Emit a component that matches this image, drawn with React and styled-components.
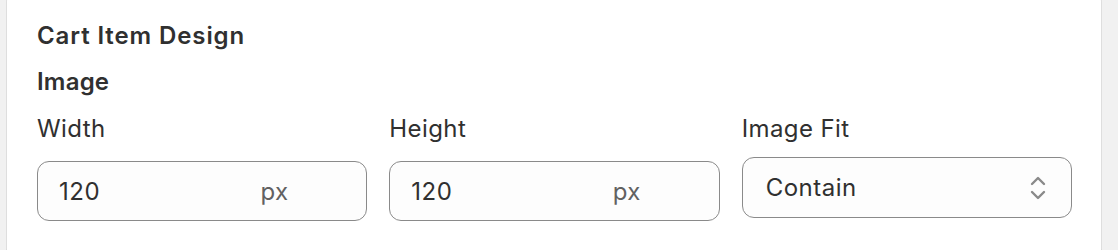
import React from 'react';
import styled, { createGlobalStyle } from 'styled-components';

const GlobalStyle = createGlobalStyle`
  body {
    margin: 0;
    background: #f1f1f1;
    font-family: "Inter", "Noto Sans", sans-serif;
    color: #303030;
    -webkit-font-smoothing: antialiased;
  }
`;

export default function App() {
  return <Page>
    <GlobalStyle/>
    <Card>
      <Title>Cart Item Design</Title>
      <Subtitle>Image</Subtitle>
      <Fields>
        <Field>
          <Label>Width</Label>
          <InputBox>
            <Value>120</Value>
            <Suffix>px</Suffix>
          </InputBox>
        </Field>
        <Field>
          <Label>Height</Label>
          <InputBox>
            <Value>120</Value>
            <Suffix>px</Suffix>
          </InputBox>
        </Field>
        <Field $select>
          <Label>Image Fit</Label>
          <SelectBox>
            <Value>Contain</Value>
            <SelectIcon/>
          </SelectBox>
        </Field>
      </Fields>
    </Card>
  </Page>
}

const SelectIcon = () => <IconSVG xmlns="http://www.w3.org/2000/svg" width="18" height="26" viewBox="0 0 18 26" fill="none" stroke="currentColor" strokeWidth="2.4" strokeLinecap="round" strokeLinejoin="round"><polyline points="3,9 9,3 15,9"></polyline><polyline points="3,17 9,23 15,17"></polyline></IconSVG>

const Page = styled.div`
  padding-left: 6px;
  width: 1096px;
  height: 250px;
  overflow: hidden;
`

const Card = styled.div`
  margin-top: -10px;
  background: #ffffff;
  border-radius: 12px;
  box-shadow: inset 1px 0 0 0 rgba(0,0,0,0.13), inset -1px 0 0 0 rgba(0,0,0,0.13), inset 0 -1px 0 0 rgba(0,0,0,0.17);
  padding: 30px 30px 40px 31px;
`

const Title = styled.h2`
  margin: 0;
  font-size: 24px;
  font-weight: 600;
  letter-spacing: 0.9px;
  line-height: 32px;
`

const Subtitle = styled.h3`
  margin: 14px 0 0;
  font-size: 24px;
  font-weight: 600;
  letter-spacing: 0.2px;
  line-height: 32px;
`

const Fields = styled.div`
  display: grid;
  grid-template-columns: 1fr 1fr 1fr;
  gap: 22px;
  margin-top: 15px;
`

const Field = styled.div`
  display: flex;
  flex-direction: column;
  gap: ${p => p.$select ? "12px" : "16px"};
`

const Label = styled.label`
  font-size: 24px;
  font-weight: 400;
  letter-spacing: 0.4px;
  line-height: 32px;
  color: #303030;
`

const InputBox = styled.div`
  display: flex;
  align-items: center;
  justify-content: space-between;
  height: 60px;
  box-sizing: border-box;
  border: 1px solid #8a8a8a;
  border-radius: 12px;
  background: #fdfdfd;
  padding: 0 78px 0 21px;
`

const SelectBox = styled(InputBox)`
  height: 61px;
  padding: 0 24px 0 23px;
`

const Value = styled.span`
  font-size: 24px;
  letter-spacing: 0.5px;
  color: #303030;
`

const Suffix = styled.span`
  font-size: 24px;
  letter-spacing: 0.3px;
  color: #616161;
`

const IconSVG = styled.svg`
  color: #8a8a8a;
  display: block;
`
